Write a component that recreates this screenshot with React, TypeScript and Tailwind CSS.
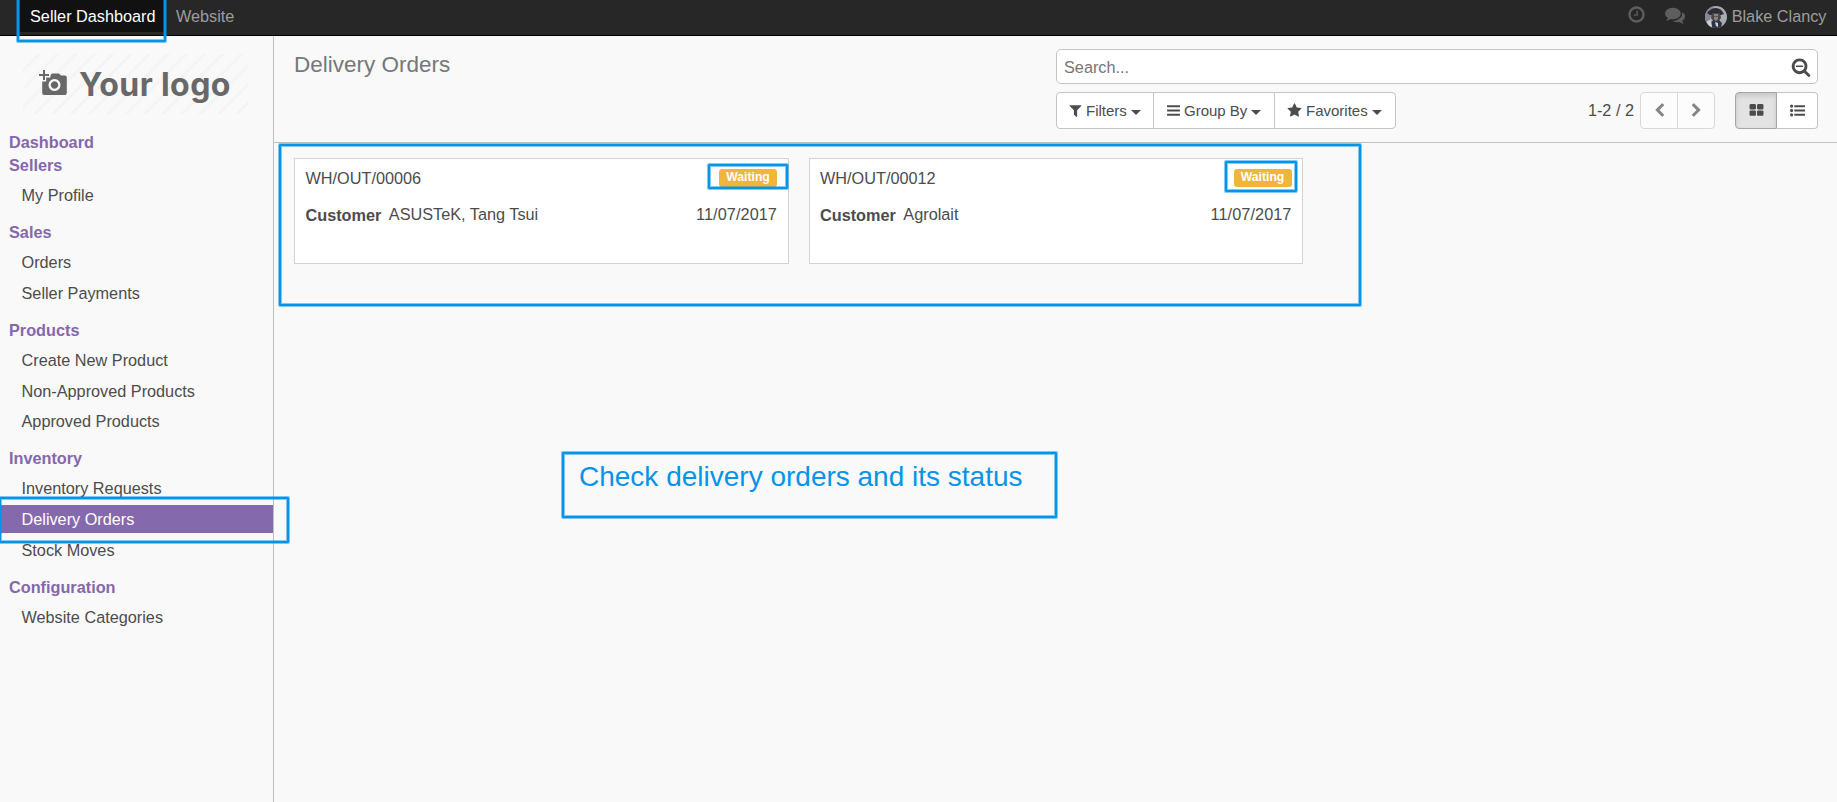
import React from "react";

const PATHS = {
  clock: "M1024 544v448q0 14-9 23t-23 9h-320q-14 0-23-9t-9-23v-64q0-14 9-23t23-9h224v-352q0-14 9-23t23-9h64q14 0 23 9t9 23zm416 352q0-148-73-273t-198-198-273-73-273 73-198 198-73 273 73 273 198 198 273 73 273-73 198-198 73-273zm224 0q0 209-103 385.5t-279.5 279.5-385.5 103-385.5-103-279.5-279.5-103-385.5 103-385.5 279.5-279.5 385.5-103 385.5 103 279.5 279.5 103 385.5z",
  comments: "M1408 768q0 139-94 257t-256.5 186.5-353.5 68.5q-86 0-176-16-124 88-278 128-36 9-86 16h-3q-11 0-20.5-8t-11.5-21q-1-3-1-6.5t.5-6.5 2-6l2.5-5 3.5-5.5 4-5 4.5-5 4-4.5q5-6 23-25t26-29.5 22.5-29 25-38.5 20.5-44q-124-72-195-177t-71-224q0-139 94-257t256.5-186.5 353.5-68.5 353.5 68.5 256.5 186.5 94 257zm384 256q0 120-71 224.5t-195 176.5q10 24 20.5 44t25 38.5 22.5 29 26 29.5 23 25q1 1 4 4.5t4.5 5 4 5 3.5 5.5l2.5 5 2 6 .5 6.5-1 6.5q-3 14-13 22t-22 7q-50-7-86-16-154-40-278-128-90 16-176 16-271 0-472-132 58 4 88 4 161 0 309-45t264-129q125-92 192-212t67-254q0-77-23-152 129 71 204 178t75 230z",
  filter: "M1595 295q17 41-14 70l-493 493v742q0 42-39 59-13 5-25 5-27 0-45-19l-256-256q-19-19-19-45v-486l-493-493q-31-29-14-70 17-39 59-39h1280q42 0 59 39z",
  bars: "M1664 1344v128q0 26-19 45t-45 19h-1408q-26 0-45-19t-19-45v-128q0-26 19-45t45-19h1408q26 0 45 19t19 45zm0-512v128q0 26-19 45t-45 19h-1408q-26 0-45-19t-19-45v-128q0-26 19-45t45-19h1408q26 0 45 19t19 45zm0-512v128q0 26-19 45t-45 19h-1408q-26 0-45-19t-19-45v-128q0-26 19-45t45-19h1408q26 0 45 19t19 45z",
  star: "M1728 647q0 22-26 48l-363 354 86 500q1 7 1 20 0 21-10.5 35.5t-30.5 14.5q-19 0-40-12l-449-236-449 236q-22 12-40 12-21 0-31.5-14.5t-10.5-35.5q0-6 2-20l86-500-364-354q-25-27-25-48 0-37 56-46l502-73 225-455q19-41 49-41t49 41l225 455 502 73q56 9 56 46z",
  searchMinus: "M1088 800v64q0 13-9.5 22.5t-22.5 9.5h-576q-13 0-22.5-9.5t-9.5-22.5v-64q0-13 9.5-22.5t22.5-9.5h576q13 0 22.5 9.5t9.5 22.5zm128 32q0-185-131.5-316.5t-316.5-131.5-316.5 131.5-131.5 316.5 131.5 316.5 316.5 131.5 316.5-131.5 131.5-316.5zm512 832q0 53-37.5 90.5t-90.5 37.5q-54 0-90-38l-343-342q-179 124-399 124-143 0-273.5-55.5t-225-150-150-225-55.5-273.5 55.5-273.5 150-225 225-150 273.5-55.5 273.5 55.5 225 150 150 225 55.5 273.5q0 220-124 399l343 343q37 37 37 90z",
  left: "M1427 301l-531 531 531 531q19 19 19 45t-19 45l-166 166q-19 19-45 19t-45-19l-742-742q-19-19-19-45t19-45l742-742q19-19 45-19t45 19l166 166q19 19 19 45t-19 45z",
  right: "M1363 877l-742 742q-19 19-45 19t-45-19l-166-166q-19-19-19-45t19-45l531-531-531-531q-19-19-19-45t19-45l166-166q19-19 45-19t45 19l742 742q19 19 19 45t-19 45z",
  large: "M832 1024v384q0 52-38 90t-90 38h-512q-52 0-90-38t-38-90v-384q0-52 38-90t90-38h512q52 0 90 38t38 90zm0-768v384q0 52-38 90t-90 38h-512q-52 0-90-38t-38-90v-384q0-52 38-90t90-38h512q52 0 90 38t38 90zm896 768v384q0 52-38 90t-90 38h-512q-52 0-90-38t-38-90v-384q0-52 38-90t90-38h512q52 0 90 38t38 90zm0-768v384q0 52-38 90t-90 38h-512q-52 0-90-38t-38-90v-384q0-52 38-90t90-38h512q52 0 90 38t38 90z",
  list: "M384 1408q0 80-56 136t-136 56-136-56-56-136 56-136 136-56 136 56 56 136zm0-512q0 80-56 136t-136 56-136-56-56-136 56-136 136-56 136 56 56 136zm1408 416v192q0 13-9.5 22.5t-22.5 9.5h-1216q-13 0-22.5-9.5t-9.5-22.5v-192q0-13 9.5-22.5t22.5-9.5h1216q13 0 22.5 9.5t9.5 22.5zm-1408-928q0 80-56 136t-136 56-136-56-56-136 56-136 136-56 136 56 56 136zm1408 416v192q0 13-9.5 22.5t-22.5 9.5h-1216q-13 0-22.5-9.5t-9.5-22.5v-192q0-13 9.5-22.5t22.5-9.5h1216q13 0 22.5 9.5t9.5 22.5zm0-512v192q0 13-9.5 22.5t-22.5 9.5h-1216q-13 0-22.5-9.5t-9.5-22.5v-192q0-13 9.5-22.5t22.5-9.5h1216q13 0 22.5 9.5t9.5 22.5z",
};

function Icon({ name, className }: { name: keyof typeof PATHS; className: string }) {
  return (
    <svg viewBox="0 0 1792 1792" fill="currentColor" className={className}>
      <path d={PATHS[name]} />
    </svg>
  );
}

function Caret() {
  return <span className="ml-1 mt-[3px] border-x-[5px] border-t-[5px] border-x-transparent border-t-[#4c4c4c]" />;
}

function Highlight({ className }: { className: string }) {
  return <div className={`pointer-events-none absolute rounded-[1px] border-2 border-[#0693e8] shadow-[0_0_0_1px_rgba(6,147,232,0.5),inset_0_0_0_1px_rgba(6,147,232,0.5)] ${className}`} />;
}

function Avatar() {
  return (
    <svg viewBox="0 0 22 22" className="size-[22px]">
      <defs>
        <clipPath id="face"><circle cx="11" cy="11" r="11" /></clipPath>
      </defs>
      <g clipPath="url(#face)">
        <rect width="22" height="22" fill="#a9abb3" />
        <path d="M0 0h8v9l-3 3 1 10H0z" fill="#858894" />
        <path d="M2 7q4-5 9-5t8 6l-3 1H5z" fill="#2a2c3a" />
        <path d="M7 7h8l1 5-3 4H9l-3-4z" fill="#4a4644" />
        <path d="M9 8h4v5l-2 2-2-2z" fill="#8f857c" />
        <path d="M9 10h4v1H9z" fill="#5a5552" />
        <path d="M6 16l3-2 2 2 3-2 3 3-1 5H7z" fill="#2e3344" />
        <path d="M10 16l3 1v4l-2-1z" fill="#c9d3de" />
        <path d="M2 15l4-1 1 8H3z" fill="#cfd1d9" />
      </g>
    </svg>
  );
}

function Logo() {
  return (
    <div className="ml-[23px] mt-[18px] flex h-[60px] w-[225px] items-center bg-[repeating-linear-gradient(135deg,#f9f9f9_0_10px,#f4f4f4_10px_13px)]">
      <svg viewBox="0 0 28 26" className="ml-4 mt-[-2px] h-[26px] w-7">
        <path d="M4 0h2v4h4v2H6v4H4V6H0V4h4z" fill="#686868" />
        <path fillRule="evenodd" d="M11.500 5l1.500-1.500h7L22 5.500h4q1.800 0 1.800 1.800V23q0 2-2 2H5q-1.800 0-1.800-2V11.500h4V7.500h4.300zM15.500 9a6 6 0 1 0 .01 0zm0 2.300a3.700 3.700 0 1 1-.01 0z" fill="#686868" />
      </svg>
      <span className="ml-3 mt-px whitespace-nowrap font-['Inter'] text-[32px] font-bold leading-none tracking-[0.4px] text-[#686868]">Your logo</span>
    </div>
  );
}

const MENU = [
  { title: "Dashboard", items: [] },
  { title: "Sellers", items: ["My Profile"] },
  { title: "Sales", items: ["Orders", "Seller Payments"] },
  { title: "Products", items: ["Create New Product", "Non-Approved Products", "Approved Products"] },
  { title: "Inventory", items: ["Inventory Requests", "Delivery Orders", "Stock Moves"] },
  { title: "Configuration", items: ["Website Categories"] },
];

function Sidebar() {
  return (
    <aside className="w-[274px] shrink-0 border-r border-[#bfbfbf]">
      <Logo />
      <nav className="pt-[17px]">
        {MENU.map(({ title, items }) => (
          <section key={title} className={items.length ? "pb-[12.200px]" : ""}>
            <h2 className="pl-[9px] font-bold leading-[23px] text-[#8567ad]">{title}</h2>
            {items.length > 0 && (
              <ul className="flex flex-col gap-[2.600px] pt-1">
                {items.map((item) => (
                  <li
                    key={item}
                    className={
                      item === "Delivery Orders"
                        ? "bg-[#8469ad] pl-[21.500px] leading-7 text-white"
                        : "pl-[21.500px] leading-7"
                    }
                  >
                    {item}
                  </li>
                ))}
              </ul>
            )}
          </section>
        ))}
      </nav>
    </aside>
  );
}

function OrderCard({ code, customer, children }: { code: string; customer: string; children: React.ReactNode }) {
  return (
    <article className="relative h-[106px] w-[494.500px] border border-[#d2d2d2] bg-white px-[10.500px] pt-2">
      <div className="flex justify-between">
        <span className="leading-[23px]">{code}</span>
        <span className="mt-[2px] h-[18px] w-[58px] rounded-[3px] bg-[#f0b63a] text-center text-[12.200px] font-bold leading-4 text-white">Waiting</span>
      </div>
      <div className="mt-[13px] flex leading-[23px]">
        <b className="mt-px">Customer</b>
        <span className="ml-[7.500px]">{customer}</span>
        <span className="ml-auto tracking-[0.080px]">11/07/2017</span>
      </div>
      {children}
    </article>
  );
}

export default function App() {
  return (
    <div className="relative flex h-[802px] w-[1837px] flex-col overflow-hidden bg-[#f9f9f9] font-['Liberation_Sans',Arial,sans-serif] text-[16.250px] text-[#4c4c4c]">
      <header className="flex h-9 shrink-0 border-b border-black bg-[#272727] leading-8 text-[#9d9d9d]">
        <span className="ml-5 h-8 w-[145px] bg-[#111] pl-[10px] text-white">Seller Dashboard</span>
        <span className="ml-[11px]">Website</span>
        <div className="ml-auto flex items-start">
          <Icon name="clock" className="mt-[5px] size-[19px] text-[#5e5e5e]" />
          <Icon name="comments" className="ml-[19px] mt-[5px] size-[20px] text-[#5e5e5e]" />
          <div className="ml-5 mt-[6px]"><Avatar /></div>
          <span className="ml-[5px] mr-[10.500px]">Blake Clancy</span>
        </div>
      </header>
      <div className="flex grow">
        <Sidebar />
        <main className="flex grow flex-col">
          <div className="flex h-[107px] justify-between border-b border-[#bfbfbf] pl-5 pr-[19px] pt-[13px]">
            <h1 className="text-[22.500px] leading-8 text-[#777]">Delivery Orders</h1>
            <div className="w-[762px]">
              <div className="flex h-[35px] items-center justify-between rounded-[5px] border border-[#c4c4c4] bg-white pl-[7px] pr-[6px]">
                <span className="pt-px text-[#757575]">Search...</span>
                <Icon name="searchMinus" className="size-[20px]" />
              </div>
              <div className="mt-2 flex h-[37px] text-[15px]">
                <div className="flex rounded-[4px] border border-[#c4c4c4] bg-white">
                  <div className="flex w-[97px] items-center border-r border-[#c4c4c4] pl-[11px]">
                    <Icon name="filter" className="size-[15px]" /><span className="ml-[3px] pt-px">Filters</span><Caret />
                  </div>
                  <div className="flex w-[121px] items-center border-r border-[#c4c4c4] pl-3">
                    <Icon name="bars" className="size-[15px]" /><span className="ml-[3px] pt-px">Group By</span><Caret />
                  </div>
                  <div className="flex w-[120px] items-center pl-3">
                    <Icon name="star" className="size-[15px]" /><span className="ml-[4px] pt-px">Favorites</span><Caret />
                  </div>
                </div>
                <div className="ml-auto flex items-center text-[16.250px]">
                  <span className="mr-[6px]">1-2 / 2</span>
                  <div className="flex h-[37px] w-[75px] rounded-[4px] border border-[#d8d8d8] bg-[#fcfcfc] text-[#858585]">
                    <span className="flex grow items-center justify-center border-r border-[#d8d8d8]"><Icon name="left" className="size-[15px]" /></span>
                    <span className="flex w-9 items-center justify-center"><Icon name="right" className="size-[15px]" /></span>
                  </div>
                  <div className="ml-5 flex h-[37px] w-[83px]">
                    <span className="flex w-[42px] items-center justify-center rounded-l-[4px] border border-[#a6a6a6] bg-[#e3e3e3] shadow-[inset_0_3px_5px_rgba(0,0,0,0.125)]"><Icon name="large" className="size-[15px]" /></span>
                    <span className="flex grow items-center justify-center rounded-r-[4px] border border-l-0 border-[#c4c4c4] bg-white"><Icon name="list" className="size-[15px]" /></span>
                  </div>
                </div>
              </div>
            </div>
          </div>
          <div className="relative flex gap-5 pl-5 pt-[15px]">
            <OrderCard code="WH/OUT/00006" customer="ASUSTeK, Tang Tsui">
              <Highlight className="left-[413px] top-[5px] h-[25px] w-[80px]" />
            </OrderCard>
            <OrderCard code="WH/OUT/00012" customer="Agrolait">
              <Highlight className="left-[415.500px] top-[2px] h-[31px] w-[72px]" />
            </OrderCard>
            <Highlight className="left-[5px] top-[1px] h-[162px] w-[1082px]" />
          </div>
        </main>
      </div>
      <Highlight className="-top-1 left-[17px] h-[46px] w-[149px]" />
      <Highlight className="-left-px top-[497px] h-[46px] w-[290px]" />
      <Highlight className="left-[562px] top-[452px] h-[66px] w-[495px]" />
      <p className="absolute left-[579px] top-[461px] text-[28px] leading-8 text-[#0693e8]">Check delivery orders and its status</p>
    </div>
  );
}
